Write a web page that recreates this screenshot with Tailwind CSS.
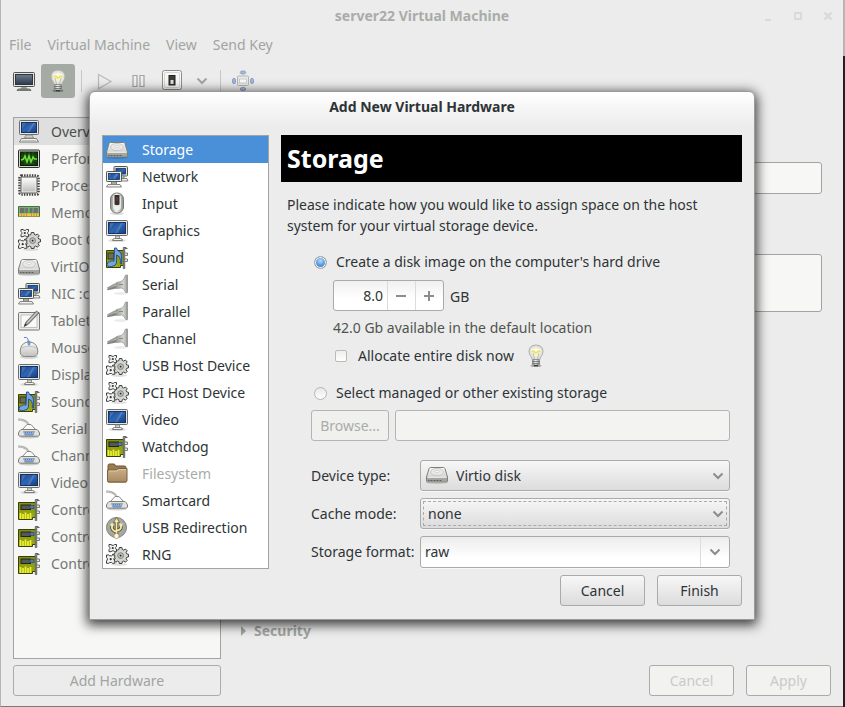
<!DOCTYPE html>
<html lang="en">
<head>
<meta charset="utf-8">
<title>server22 Virtual Machine</title>
<script src="https://cdn.jsdelivr.net/npm/@tailwindcss/browser@4"></script>
</head>
<body class="bg-[#ececec]">

<!-- Icon sheet -->
<svg class="absolute size-0" aria-hidden="true">
  <defs>
    <linearGradient id="g-screen" x1="0" y1="0" x2="1" y2="1"><stop offset="0" stop-color="#1c4587"/><stop offset=".5" stop-color="#2f66b4"/><stop offset="1" stop-color="#183c7c"/></linearGradient>
    <linearGradient id="g-dark" x1="0" y1="0" x2="0" y2="1"><stop offset="0" stop-color="#6f7c8d"/><stop offset="1" stop-color="#2b394c"/></linearGradient>
    <linearGradient id="g-metal" x1="0" y1="0" x2="0" y2="1"><stop offset="0" stop-color="#fbfbfa"/><stop offset="1" stop-color="#bfc0bc"/></linearGradient>
    <linearGradient id="g-side" x1="0" y1="0" x2="1" y2="0"><stop offset="0" stop-color="#8d8f8a"/><stop offset=".45" stop-color="#f4f4f2"/><stop offset="1" stop-color="#8d8f8a"/></linearGradient>
    <linearGradient id="g-plug" x1="0" y1="0" x2="1" y2="0"><stop offset="0" stop-color="#9a9c97"/><stop offset=".6" stop-color="#d3d4cf"/><stop offset="1" stop-color="#a3a5a0"/></linearGradient>
    <linearGradient id="g-card" x1="0" y1="0" x2="0" y2="1"><stop offset="0" stop-color="#7f8f14"/><stop offset="1" stop-color="#9fae0f"/></linearGradient>
    <linearGradient id="g-folder" x1="0" y1="0" x2="0" y2="1"><stop offset="0" stop-color="#cbb08a"/><stop offset="1" stop-color="#a98a60"/></linearGradient>
    <radialGradient id="g-bulb"><stop offset="0" stop-color="#fffbd0"/><stop offset=".5" stop-color="#f1f0dc"/><stop offset="1" stop-color="#d9dad5"/></radialGradient>

    <symbol id="i-monitor" viewBox="0 0 24 24">
      <ellipse cx="12" cy="21.500" rx="9" ry="1.600" fill="#000" opacity=".12"/>
      <rect x="1.500" y="1.500" width="21" height="15" rx="1" fill="#e4e5e1" stroke="#6b6e68"/>
      <rect x="3.500" y="3.500" width="17" height="11" fill="url(#g-screen)" stroke="#12336b"/>
      <path d="M9 4 5 10V4ZM16 4l-6 10h2.500L18 4Z" fill="#fff" opacity=".16"/>
      <path d="M10.500 17h4v2.500h-4z" fill="#d4d5d1" stroke="#80837d" stroke-width=".8"/>
      <path d="M7.500 21.500q0-2 2-2h6q2 0 2 2z" fill="#f1f1ef" stroke="#7c7f79"/>
    </symbol>
    <symbol id="i-computer" viewBox="0 0 24 24">
      <rect x="2.500" y=".5" width="19" height="14" rx="1" fill="#e4e5e1" stroke="#6b6e68"/>
      <rect x="4.500" y="2.500" width="15" height="10" fill="url(#g-screen)" stroke="#12336b"/>
      <path d="M9 3 5 9V3ZM16 3l-6 9h2.500L18 3Z" fill="#fff" opacity=".16"/>
      <path d="M9 15h6l1.500 3h-9z" fill="#cfd0cc" stroke="#7c7f79" stroke-width=".8"/>
      <path d="M4.500 18.500h15l2 3.500h-19z" fill="#f1f1ef" stroke="#7c7f79"/>
      <path d="M5.500 20.500h13" stroke="#8e908b" stroke-dasharray="1 1"/>
    </symbol>
    <symbol id="i-network" viewBox="0 0 24 24">
      <rect x="9" y="1.500" width="13.500" height="9.500" rx=".8" fill="#e4e5e1" stroke="#55584f"/>
      <rect x="11" y="3.500" width="9.500" height="5.500" fill="url(#g-screen)" stroke="#12336b" stroke-width=".8"/>
      <path d="M15 11h4v2h-4zM13 13.500h9l1 2.500h-9z" fill="#ecece9" stroke="#686b65" stroke-width=".8"/>
      <rect x="1.500" y="6.500" width="15" height="10" rx=".8" fill="#ecece9" stroke="#55584f"/>
      <rect x="3.500" y="8.500" width="11" height="6" fill="url(#g-screen)" stroke="#12336b" stroke-width=".8"/>
      <path d="M6 9 4 12V9ZM11 9l-3 5h2l3-5Z" fill="#fff" opacity=".2"/>
      <path d="M6.500 17h5v2h-5z" fill="#cfd0cc" stroke="#686b65" stroke-width=".8"/>
      <path d="M3 19.500h12l1.500 2.500h-15z" fill="#f1f1ef" stroke="#686b65" stroke-width=".8"/>
    </symbol>
    <symbol id="i-perf" viewBox="0 0 24 24">
      <rect x="1.500" y="3" width="21" height="17.500" rx="1" fill="#d3d4d0" stroke="#2b2d29"/>
      <rect x="3.500" y="5" width="17" height="13.500" fill="#163a0c" stroke="#0b1c06"/>
      <path d="M8 5v13M12 5v13M16 5v13M4 9h16M4 14h16" stroke="#2e6a1c" stroke-width=".6"/>
      <path d="m4 13 2.500-1L8 9l2 6 2-6 2 6 2-5 1.500 2H20" fill="none" stroke="#6be03b" stroke-width="1.600"/>
    </symbol>
    <symbol id="i-cpu" viewBox="0 0 24 24">
      <rect x="2.500" y="1.500" width="19" height="19" rx="2" fill="none" stroke="#3c3e3a" stroke-width="2.500" stroke-dasharray="1.400 1.200"/>
      <rect x="4" y="3" width="16" height="16" rx="1.500" fill="#f1f1ef" stroke="#5b5d58"/>
      <rect x="5.500" y="4.500" width="13" height="13" fill="url(#g-metal)"/>
    </symbol>
    <symbol id="i-ram" viewBox="0 0 24 24">
      <path d="M1.500 5.500h21v10h-21z" fill="#7fb078" stroke="#4a6b45"/>
      <path d="M3 7h4.500v5H3zM8.300 7h2.500v5H8.300zM12.500 7h3v5h-3zM16.500 7H21v5h-4.500z" fill="#6a706c"/>
      <path d="M2 12.500h20v3H2z" fill="#f0c64a"/>
      <path d="M4.500 12.500v3M7 12.500v3M9.500 12.500v3M14.500 12.500v3M17 12.500v3M19.500 12.500v3" stroke="#a0761c" stroke-width=".6"/>
      <path d="M11.700 5.500v7" stroke="#56c24a"/>
    </symbol>
    <symbol id="i-gears" viewBox="0 0 24 24">
      <ellipse cx="14" cy="21.500" rx="8" ry="1.500" fill="#000" opacity=".12"/>
      <g fill="#f0f1ee" stroke="#3d403b" stroke-linejoin="round">
        <path d="M14.300 4.500h2.600l.4 2 1.400.6 1.700-1.100 1.800 1.800-1.100 1.700.6 1.400 1.800.4v2.600l-1.800.4-.6 1.400 1.100 1.700-1.800 1.800-1.700-1.100-1.400.6-.4 1.800h-2.600l-.4-1.800-1.400-.6-1.700 1.100L9 17.400l1.100-1.700-.6-1.400-2-.4v-2.600l2-.4.600-1.400L9 7.800 10.800 6l1.700 1.100 1.400-.6Z" fill="#d3d5d1"/>
        <circle cx="15.600" cy="12.600" r="2.900" fill="#bbbdb9" stroke="#70736d" stroke-width=".8"/>
        <circle cx="15.600" cy="12.600" r=".9" fill="#222" stroke="none"/>
        <path d="M4 1.500h2l1 .8h1.500l1-.8h2v2l-.8 1v1.200l.8 1v2h-2l-1-.8H7l-1 .8H4v-2l.8-1V4.500L4 3.500Z"/>
        <circle cx="7.800" cy="5" r="1.100" fill="#333" stroke="none"/>
        <path d="M1.500 12h2.300l1 .8h1.700l1-.8h2.300v2.300l-.8 1V17l.8 1v2.300H7.500l-1-.8H4.800l-1 .8H1.500V18l.8-1v-1.700l-.8-1Z"/>
        <circle cx="5.700" cy="16.200" r="1.100" fill="#333" stroke="none"/>
      </g>
    </symbol>
    <symbol id="i-disk" viewBox="0 0 24 24">
      <ellipse cx="12" cy="19.500" rx="11" ry="1.500" fill="#000" opacity=".15"/>
      <path d="M5.500 4.500h13q1 0 1.400 1l2.600 8.500v4q0 .8-1 .8h-19q-1 0-1-.8v-4L4.100 5.500q.4-1 1.400-1Z" fill="url(#g-metal)" stroke="#7d807a"/>
      <ellipse cx="12" cy="9" rx="6.500" ry="3.600" fill="#e8e9e6" stroke="#c0c2bd" stroke-width=".8"/>
      <ellipse cx="12" cy="8.500" rx="2" ry="1" fill="#fff" stroke="#c0c2bd" stroke-width=".6"/>
      <path d="M2 14.500h20v3.700H2z" fill="#a3a6a0"/>
      <path d="M2.500 14.300h19" stroke="#fff" opacity=".8"/>
      <path d="M3 17.500h14" stroke="#5c5f59" stroke-dasharray="1 .5"/>
    </symbol>
    <symbol id="i-tablet" viewBox="0 0 24 24">
      <rect x="1.500" y="3.500" width="21" height="17.500" rx="1" fill="#ecece9" stroke="#767973"/>
      <rect x="4" y="6" width="16" height="12.500" fill="#fafaf9" stroke="#b4b6b1" stroke-width=".8"/>
      <path d="M7 17.500 9 13 19.500 2l2.500 2L11.500 15Z" fill="#9b9e99" stroke="#5b5e58" stroke-width=".8"/>
      <path d="m7 17.500 1.500-3 1.500 1.500z" fill="#2b2d2a"/>
      <path d="M10.500 13.500 20 3.500" stroke="#dcdedb"/>
    </symbol>
    <symbol id="i-mouse" viewBox="0 0 24 24">
      <path d="M7 1.500q5-1 4 5" fill="none" stroke="#5e87c4"/>
      <ellipse cx="12" cy="21" rx="9" ry="1.800" fill="#000" opacity=".15"/>
      <path d="M12 6q7 0 8.500 7t-4 7.500h-9q-5.500-.5-4-7.500T12 6Z" fill="url(#g-metal)" stroke="#868983"/>
      <path d="M4.500 12q7.500-3.500 15 0M12 6v4" fill="none" stroke="#b4b6b1" stroke-width=".8"/>
      <rect x="11" y="5" width="2" height="4" rx="1" fill="#82b0ea" stroke="#4772ad" stroke-width=".6"/>
    </symbol>
    <symbol id="i-input" viewBox="0 0 24 24">
      <ellipse cx="12" cy="21.500" rx="7" ry="1.500" fill="#000" opacity=".15"/>
      <rect x="5.500" y="1" width="13" height="20" rx="6.200" fill="url(#g-side)" stroke="#747771"/>
      <rect x="8" y="2.500" width="8" height="16" rx="4" fill="#f2f2f0" opacity=".8"/>
      <path d="M9.500 3h5v9.500q-2.500 1.500-5 0z" fill="#333"/>
      <rect x="11" y="5" width="2" height="4" rx="1" fill="#7a3030"/>
    </symbol>
    <symbol id="i-card" viewBox="0 0 24 24">
      <path d="M1.500 4.500h17v15h-3v2h-14z" fill="url(#g-card)" stroke="#37400a"/>
      <rect x="4" y="7" width="9.500" height="4.500" fill="#54585b" stroke="#22240f"/>
      <path d="M13 7.500h4v3h-4z" fill="#4a7cb8" stroke="#22395c" stroke-width=".6"/>
      <path d="M3.500 15v6M6 16v5M8.500 14.500v6.500M11 16v5M13.500 15v6" stroke="#eef032" stroke-width="1.700"/>
      <path d="M22.500 2.500h-2.800v20h-1.400V1.500h3" fill="#c8c9c5" stroke="#60635d"/>
      <path d="M20 7h2.500v2.500H20M20 13h2.500v2.500H20" fill="#e3e4e1" stroke="#60635d" stroke-width=".8"/>
    </symbol>
    <symbol id="i-sound" viewBox="0 0 24 24">
      <path d="M1.500 4.500h17v15h-3v2h-14z" fill="url(#g-card)" stroke="#37400a"/>
      <rect x="3" y="7" width="6" height="6" fill="#6b6d5a" stroke="#383b10"/>
      <path d="M13 7h4v4h-4z" fill="#4a7a22"/>
      <path d="M22.500 2.500h-2.800v20h-1.400V1.500h3" fill="#c8c9c5" stroke="#60635d"/>
      <path d="M20 7h2.500v2.500H20M20 13h2.500v2.500H20" fill="#e3e4e1" stroke="#60635d" stroke-width=".8"/>
      <path d="M9.500 2h2q.5 3 3.500 4 2 1 1.500 12h-1.200q1-8-3.800-9v8q-.5 3-5 3.500t-4.500-2 4-3.500q2-.3 3 .2Z" fill="#74a5e3" stroke="#1e4b8d" stroke-width=".9"/>
    </symbol>
    <symbol id="i-plug" viewBox="0 0 24 24">
      <ellipse cx="16" cy="20.500" rx="7" ry="1.500" fill="#000" opacity=".08"/>
      <path d="M2 14.500 11.500 9.500l1.500 1.500L3 16Z" fill="#9b9e98"/>
      <path d="M2 16 10 12.800l3.500-.8v3L9 16l-6.500 1.200z" fill="#83867f"/>
      <path d="M11.500 9.500 16 8.500q3.500-1.500 4.500-6.500h2v17.500h-2q-1-4-4-4.500l-5 .5Z" fill="url(#g-plug)" stroke="#9a9c97" stroke-width=".8"/>
      <path d="M14 11.500h4" stroke="#878a84"/>
      <path d="M22 2v17.500" stroke="#90938d"/>
    </symbol>
    <symbol id="i-serial" viewBox="0 0 24 24">
      <path d="M1 2.500q8 0 10.500 5" fill="none" stroke="#a1a39f" stroke-width="1.800"/>
      <path d="M1 2.500q8 0 10.500 5" fill="none" stroke="#e0e1de" stroke-width=".6"/>
      <ellipse cx="12" cy="20" rx="10" ry="1.500" fill="#000" opacity=".18"/>
      <path d="M10 7.500h4l5 5.500H5Z" fill="#fafaf9" stroke="#868983"/>
      <path d="M4 12.500h16q1.500 1 2.500 3.500v2q-.5 1.200-2 1.200h-17q-1.500 0-2-1.200v-2Q2.500 13.500 4 12.500Z" fill="#e1e2df" stroke="#7c7f79"/>
      <path d="M6.500 14.500h11l-1.500 4H8Z" fill="#8fb2e2" stroke="#90938d" stroke-width=".7"/>
      <path d="M8 15.700h8M8.500 17.300h7" stroke="#4475ba" stroke-width="1" stroke-dasharray="1 1"/>
    </symbol>
    <symbol id="i-folder" viewBox="0 0 24 24">
      <path d="M3 20V3.500Q3 2 4.500 2H9q1 0 1.500 2h9Q21 4 21 5.500V20z" fill="#9b7b50" stroke="#6e5536"/>
      <path d="M2.500 8h9L13 6.500h9v12q0 1.500-1.500 1.500H4q-1.500 0-1.500-1.500Z" fill="url(#g-folder)" stroke="#77603e"/>
      <path d="M4 9h8l1.500-1.500H21" fill="none" stroke="#e2cfae" stroke-width=".8"/>
    </symbol>
    <symbol id="i-usb" viewBox="0 0 24 24">
      <circle cx="11.500" cy="11.500" r="10" fill="#a6a8a4" stroke="#7b7e78"/>
      <path d="M11.500 5v14M7 9v3q0 2 4.500 4M16 9v2.500q0 2-4.500 3.500" fill="none" stroke="#4c4428" stroke-width="3.400"/>
      <path d="m11.500 1.500 3 5h-6z" fill="#f8eba8" stroke="#5c5230" stroke-width=".7"/>
      <path d="M11.500 5v14M7 9v3q0 2 4.500 4M16 9v2.500q0 2-4.500 3.500" fill="none" stroke="#f8eba8" stroke-width="1.800"/>
      <circle cx="7" cy="9" r="1.700" fill="#f8eba8"/><path d="M14.500 7.500h3v3h-3z" fill="#f8eba8"/>
      <circle cx="11.500" cy="20" r="2.600" fill="#fff8d5" stroke="#8a7d50" stroke-width=".6"/>
    </symbol>
    <symbol id="i-bulb" viewBox="0 0 24 24">
      <ellipse cx="12" cy="21.800" rx="5.500" ry="1.300" fill="#000" opacity=".3"/>
      <path d="M12 1q7 .3 7 6.500 0 3-2 5.200-1 1.300-1 2.800H8q0-1.500-1-2.800Q5 10.500 5 7.500 5 1.300 12 1Z" fill="url(#g-bulb)" stroke="#aeb0ab"/>
      <path d="M8 5.500q1.500 2.500 4 0 2.500 2.500 4 0" fill="none" stroke="#fff" stroke-width="2"/>
      <path d="M8 8q1.500-2 2.700 0t2.600 0T16 8" fill="none" stroke="#ece352" stroke-width="1.600"/>
      <path d="m9 9 1.500 6M15 9l-1.500 6" stroke="#b3b5b0" stroke-width=".8"/>
      <rect x="8.500" y="15.500" width="7" height="5.500" rx="1" fill="url(#g-side)" stroke="#7b7e78" stroke-width=".7"/>
      <path d="M8.500 17.500h7M8.500 19.500h7" stroke="#666964" stroke-width=".8"/>
      <path d="M10 21h4v1.300h-4z" fill="#3a3c38"/>
    </symbol>
    <symbol id="i-console" viewBox="0 0 24 24">
      <rect x="1.500" y="3.500" width="21" height="14" rx="1" fill="#e4e5e1" stroke="#50534d"/>
      <rect x="3.500" y="5.500" width="17" height="10" fill="url(#g-dark)" stroke="#2a3546"/>
      <path d="M9.500 18h5l1 2h-7z" fill="#9a9c97"/>
      <path d="M5 21.500Q5 20 7 20h10q2 0 2 1.500z" fill="#8b8e88" stroke="#60635d" stroke-width=".8"/>
    </symbol>
    <symbol id="i-play" viewBox="0 0 24 24"><path d="m5.500 5.500 12.500 7-12.500 7.200Z" fill="#ededeb" stroke="#b9bbb7" stroke-width="1.200"/></symbol>
    <symbol id="i-pause" viewBox="0 0 24 24"><path d="M6 6.500h4v11H6zM13 6.500h4v11h-4z" fill="#f0f0ef" stroke="#a2a4a0" stroke-width="1.200"/></symbol>
    <symbol id="i-power" viewBox="0 0 24 24">
      <rect x="1.500" y="1.500" width="19" height="19" rx="2" fill="#f6f6f5" stroke="#8c8e89"/>
      <rect x="3.500" y="3.500" width="15" height="15" rx="1" fill="none" stroke="#d7d8d5"/>
      <rect x="8" y="6.500" width="6" height="9.500" fill="#3c3e3a" stroke="#20211f"/>
      <rect x="9.500" y="11" width="3" height="4" fill="#dcdcda"/>
    </symbol>
    <symbol id="i-full" viewBox="0 0 24 24">
      <g fill="#a3b7da" stroke="#7f97c2" stroke-width=".8"><ellipse cx="12" cy="3.500" rx="2.800" ry="1.600"/><ellipse cx="12" cy="20" rx="2.800" ry="1.600"/><ellipse cx="3" cy="12" rx="1.600" ry="2.800"/><ellipse cx="21" cy="12" rx="1.600" ry="2.800"/></g>
      <rect x="6.500" y="7" width="11" height="9.500" rx="1" fill="#e9eae8" stroke="#b4b6b2"/>
      <rect x="8.500" y="10" width="7" height="4" fill="#fbfbfb" stroke="#c5c7c3" stroke-width=".8"/>
    </symbol>
    <symbol id="i-chevron" viewBox="0 0 12 12"><path d="m1.500 3.500 4.500 4.500 4.500-4.500" fill="none" stroke="currentColor" stroke-width="2"/></symbol>
  </defs>
</svg>

<div class="relative flex min-h-screen font-['Noto_Sans','Open_Sans',sans-serif] text-sm text-[#2e3436]">

  <!-- Virtual machine window -->
  <div class="flex flex-1 flex-col border-b border-l border-b-[#7a7a7a] border-l-[#b5b5b5] bg-[#ececec] text-[#a1a4a1]">
    <header class="grid h-[31px] shrink-0 grid-cols-[1fr_auto_1fr] items-center px-1.5">
      <h1 class="col-start-2 font-bold text-[#a9aca9]">server22 Virtual Machine</h1>
      <div class="flex justify-end gap-3 text-[#d8dad8]">
        <button disabled aria-label="Minimize" class="flex size-[18px] items-center justify-center"><svg class="size-3" viewBox="0 0 12 12"><path d="M3 10h6" stroke="currentColor" stroke-width="2"/></svg></button>
        <button disabled aria-label="Maximize" class="flex size-[18px] items-center justify-center"><svg class="size-3" viewBox="0 0 12 12"><path d="M3 3h6v6H3z" fill="none" stroke="currentColor" stroke-width="2"/></svg></button>
        <button disabled aria-label="Close" class="flex size-[18px] items-center justify-center"><svg class="size-3" viewBox="0 0 12 12"><path d="m2.500 2.500 7 7m0-7-7 7" stroke="currentColor" stroke-width="2.400"/></svg></button>
      </div>
    </header>

    <nav class="flex h-7 items-center gap-4 px-2">
      <button disabled>File</button>
      <button disabled>Virtual Machine</button>
      <button disabled>View</button>
      <button disabled>Send Key</button>
    </nav>

    <div class="flex items-center px-1.5 pt-[5px] pb-1">
      <button disabled aria-label="Console" class="flex size-[34px] items-center justify-center"><svg class="size-6"><use href="#i-console"/></svg></button>
      <button disabled aria-label="Details" class="flex size-[34px] items-center justify-center rounded-[3px] bg-[#a5aaa5]"><svg class="size-6"><use href="#i-bulb"/></svg></button>
      <span class="mx-1.5 h-[22px] w-px bg-[#c6c8c6]"></span>
      <button disabled aria-label="Run" class="flex size-[34px] items-center justify-center"><svg class="size-6"><use href="#i-play"/></svg></button>
      <button disabled aria-label="Pause" class="flex size-[34px] items-center justify-center"><svg class="size-6"><use href="#i-pause"/></svg></button>
      <button disabled aria-label="Shut down" class="flex size-[34px] items-center justify-center"><svg class="size-6"><use href="#i-power"/></svg></button>
      <button disabled aria-label="Shut down options" class="flex h-[34px] w-6 items-center justify-center"><svg class="size-3"><use href="#i-chevron"/></svg></button>
      <span class="mx-1.5 h-[22px] w-px bg-[#c6c8c6]"></span>
      <button disabled aria-label="Fullscreen" class="flex h-[34px] w-8 items-center justify-center"><svg class="size-6"><use href="#i-full"/></svg></button>
    </div>

    <main class="flex flex-1 flex-col gap-1.5 px-3 pt-[15px] pb-2.5">
      <div class="flex flex-1 gap-4">
        <ul class="w-[208px] border border-[#a1a4a1] bg-[#f7f7f6] text-[#747774] [&_button]:flex [&_button]:h-[27px] [&_button]:w-full [&_button]:items-center [&_button]:gap-2.5 [&_button]:px-[3px] [&_svg]:size-6 [&_svg]:shrink-0">
          <li class="bg-[#dfdfdf] text-[#4a4e4c]"><button disabled><svg><use href="#i-computer"/></svg>Overview</button></li>
          <li><button disabled><svg><use href="#i-perf"/></svg>Performance</button></li>
          <li><button disabled><svg><use href="#i-cpu"/></svg>Processor</button></li>
          <li><button disabled><svg><use href="#i-ram"/></svg>Memory</button></li>
          <li><button disabled><svg><use href="#i-gears"/></svg>Boot Options</button></li>
          <li><button disabled><svg><use href="#i-disk"/></svg>VirtIO Disk 1</button></li>
          <li><button disabled><svg><use href="#i-network"/></svg>NIC :c</button></li>
          <li><button disabled><svg><use href="#i-tablet"/></svg>Tablet</button></li>
          <li><button disabled><svg><use href="#i-mouse"/></svg>Mouse</button></li>
          <li><button disabled><svg><use href="#i-monitor"/></svg>Display</button></li>
          <li><button disabled><svg><use href="#i-sound"/></svg>Sound</button></li>
          <li><button disabled><svg><use href="#i-serial"/></svg>Serial 1</button></li>
          <li><button disabled><svg><use href="#i-serial"/></svg>Channel</button></li>
          <li><button disabled><svg><use href="#i-monitor"/></svg>Video</button></li>
          <li><button disabled><svg><use href="#i-card"/></svg>Controller</button></li>
          <li><button disabled><svg><use href="#i-card"/></svg>Controller</button></li>
          <li><button disabled><svg><use href="#i-card"/></svg>Controller</button></li>
        </ul>
        <section class="flex flex-1 flex-col pt-[45px] pr-[9px] pl-0.5">
          <input disabled aria-label="Name" class="ml-24 h-8 rounded-[3px] border border-[#a1a4a1] bg-[#f7f7f5]">
          <textarea disabled aria-label="Description" class="mt-[60px] ml-24 h-[58px] resize-none rounded-[3px] border border-[#a1a4a1] bg-[#f7f7f5]"></textarea>
          <button disabled class="mt-auto mb-[18px] flex items-center gap-[5px] font-bold"><svg class="size-2.5" viewBox="0 0 10 10"><path d="M2 0v10l5-5z" fill="currentColor"/></svg>Security</button>
        </section>
      </div>
      <footer class="flex gap-3 [&>button]:h-[31px] [&>button]:rounded-[3px] [&>button]:border [&>button]:border-[#a9aca9]">
        <button disabled class="mr-auto w-[208px]">Add Hardware</button>
        <button disabled class="w-[85px] bg-[#f2f2f0] text-[#c9cbc9]">Cancel</button>
        <button disabled class="w-[85px] bg-[#f2f2f0] text-[#c9cbc9]">Apply</button>
      </footer>
    </main>
  </div>
  <div class="w-0.5 shrink-0 bg-linear-to-b from-[#b5b5b5] from-[56px] to-[#1f2028] to-[56px]"></div>

  <!-- Add hardware dialog -->
  <form role="dialog" aria-labelledby="dialog-title" class="absolute top-[91px] right-[90px] left-[89px] rounded-t-md border border-[#9a9a9a] bg-[#ececec] bg-linear-to-b from-white to-[#ececec] to-[34px] px-3 pb-[13px] shadow-[0_3px_12px_2px_rgba(0,0,0,0.75)]">
    <h2 id="dialog-title" class="flex h-[43px] items-start justify-center pt-[5px] font-bold">Add New Virtual Hardware</h2>
    <div class="flex gap-3">
      <ul class="w-[167px] shrink-0 self-start border border-[#a1a4a1] bg-white [&_button]:flex [&_button]:h-[27px] [&_button]:w-full [&_button]:items-center [&_button]:gap-[13px] [&_button]:px-0.5 [&_svg]:size-6 [&_svg]:shrink-0">
        <li class="bg-[#4a90d9] text-white"><button type="button"><svg><use href="#i-disk"/></svg>Storage</button></li>
        <li><button type="button"><svg><use href="#i-network"/></svg>Network</button></li>
        <li><button type="button"><svg><use href="#i-input"/></svg>Input</button></li>
        <li><button type="button"><svg><use href="#i-monitor"/></svg>Graphics</button></li>
        <li><button type="button"><svg><use href="#i-sound"/></svg>Sound</button></li>
        <li><button type="button"><svg><use href="#i-plug"/></svg>Serial</button></li>
        <li><button type="button"><svg><use href="#i-plug"/></svg>Parallel</button></li>
        <li><button type="button"><svg><use href="#i-plug"/></svg>Channel</button></li>
        <li><button type="button"><svg><use href="#i-gears"/></svg>USB Host Device</button></li>
        <li><button type="button"><svg><use href="#i-gears"/></svg>PCI Host Device</button></li>
        <li><button type="button"><svg><use href="#i-monitor"/></svg>Video</button></li>
        <li><button type="button"><svg><use href="#i-card"/></svg>Watchdog</button></li>
        <li class="text-[#a9aca9]"><button type="button" disabled><svg><use href="#i-folder"/></svg>Filesystem</button></li>
        <li><button type="button"><svg><use href="#i-serial"/></svg>Smartcard</button></li>
        <li><button type="button"><svg><use href="#i-usb"/></svg>USB Redirection</button></li>
        <li><button type="button"><svg><use href="#i-gears"/></svg>RNG</button></li>
      </ul>

      <div class="flex flex-1 flex-col">
        <h3 class="flex h-[47px] items-center bg-black px-1.5 text-[25px] font-bold text-white">Storage</h3>
        <p class="mt-3 px-1.5 leading-[21px]">Please indicate how you would like to assign space on the host<br>system for your virtual storage device.</p>

        <div class="mt-4 flex flex-col pr-3 pl-[30px]">
          <label class="flex h-5 items-center gap-1.5"><input type="radio" name="source" checked class="m-[3px] size-[13px] appearance-none rounded-full border border-[#a3a39a] bg-[radial-gradient(circle_at_50%_35%,#b5dcff,#4a90d9_55%,#2a63b0)] shadow-[inset_0_0_0_1px_#f4f4f4]">Create a disk image on the computer's hard drive</label>
          <div class="mt-2 flex items-center gap-1.5 pl-[22px]">
            <div class="flex h-[31px] w-[111px] rounded-[3px] border border-[#a9aba9] bg-linear-to-b from-[#f0f0f0] to-white to-60% text-[#8a8d89]">
              <input id="size" type="text" value="8.0" class="w-0 flex-1 bg-transparent pr-1 text-right text-[#2e3436]">
              <button type="button" aria-label="Decrease" class="flex w-7 items-center justify-center border-l border-[#dcdcdc] pr-0.5"><svg class="size-3" viewBox="0 0 12 12"><path d="M1 6h10" stroke="currentColor" stroke-width="2"/></svg></button>
              <button type="button" aria-label="Increase" class="flex w-7 items-center justify-center border-l border-[#dcdcdc] pr-0.5"><svg class="size-3" viewBox="0 0 12 12"><path d="M1 6h10M6 1v10" stroke="currentColor" stroke-width="2"/></svg></button>
            </div>
            <label for="size" class="pt-0.5">GB</label>
          </div>
          <p class="mt-[7px] pl-[22px] text-[#50544f]">42.0 Gb available in the default location</p>
          <div class="mt-1.5 flex h-6 items-center gap-2.5 pl-6">
            <label class="flex items-center gap-[11px]"><input type="checkbox" class="size-3 appearance-none rounded-[2px] border border-[#b9bbb7] bg-linear-to-b from-[#eeeeec] to-white">Allocate entire disk now</label>
            <svg class="size-6"><use href="#i-bulb"/></svg>
          </div>
          <label class="mt-[15px] flex h-5 items-center gap-1.5"><input type="radio" name="source" class="m-[3px] size-[13px] appearance-none rounded-full border border-[#b3b6b0] bg-linear-to-b from-[#e8e8e5] to-white">Select managed or other existing storage</label>
          <div class="mt-[7px] flex gap-1.5">
            <button type="button" disabled class="h-[31px] w-[78px] rounded-[3px] border border-[#b3b5b3] bg-[#f0f0ee] text-[#a9aca9]">Browse...</button>
            <input disabled aria-label="Storage path" class="h-[31px] w-0 flex-1 rounded-[3px] border border-[#b3b5b3] bg-[#f3f3f1]">
          </div>

          <div class="mt-[19px] grid grid-cols-[109px_1fr] items-center gap-y-[7px]">
            <label for="device">Device type:</label>
            <div class="relative">
              <select id="device" class="h-[31px] w-full appearance-none rounded-[3px] border border-[#a9aba9] bg-linear-to-b from-[#f7f7f7] to-[#dcdcdc] pl-[35px] shadow-[0_1px_0_#f7f7f7]"><option>Virtio disk</option></select>
              <svg class="pointer-events-none absolute top-[3px] left-[5px] size-6"><use href="#i-disk"/></svg>
              <svg class="pointer-events-none absolute top-[10px] right-[6px] size-3 text-[#8a8d89]"><use href="#i-chevron"/></svg>
            </div>
            <label for="cache">Cache mode:</label>
            <div class="relative">
              <select id="cache" class="h-[31px] w-full appearance-none rounded-[3px] border border-[#a9aba9] bg-linear-to-b from-[#f7f7f7] to-[#dcdcdc] pl-[7px] shadow-[0_1px_0_#f7f7f7] outline outline-dashed -outline-offset-4 outline-[#aaaaaa]"><option>none</option></select>
              <svg class="pointer-events-none absolute top-[10px] right-[6px] size-3 text-[#8a8d89]"><use href="#i-chevron"/></svg>
            </div>
            <label for="format">Storage format:</label>
            <div class="flex h-8 rounded-[3px] border border-[#a9aba9] bg-linear-to-b from-[#ececec] to-white to-70% shadow-[0_1px_0_#f7f7f7]">
              <input id="format" type="text" value="raw" class="w-0 flex-1 bg-transparent px-1">
              <button type="button" aria-label="Show formats" class="flex w-[29px] items-center justify-center border-l border-[#dcdcdc] text-[#8a8d89]"><svg class="size-3"><use href="#i-chevron"/></svg></button>
            </div>
          </div>
        </div>
      </div>
    </div>
    <div class="mt-1.5 flex justify-end gap-3 [&>button]:h-[31px] [&>button]:w-[85px] [&>button]:rounded-[3px] [&>button]:border [&>button]:border-[#a9aba9] [&>button]:bg-linear-to-b [&>button]:from-[#f7f7f7] [&>button]:to-[#dcdcdc]">
      <button type="button">Cancel</button>
      <button type="submit">Finish</button>
    </div>
  </form>
</div>
</body>
</html>
